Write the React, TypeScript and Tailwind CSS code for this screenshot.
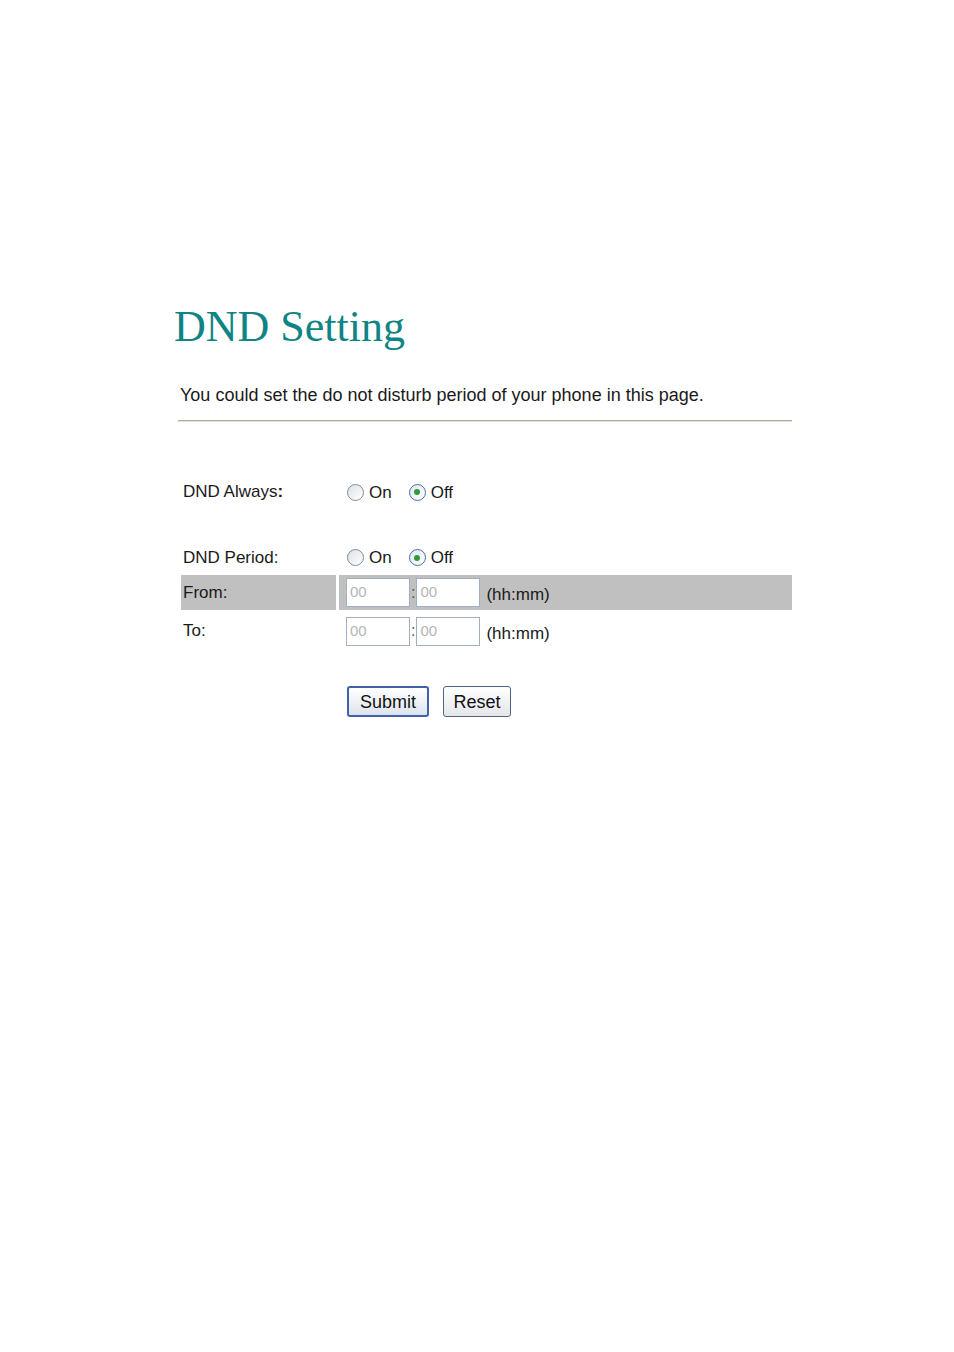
import React from "react";

function Radio({ checked, label }: { checked?: boolean; label: string }) {
  return (
    <div className="flex items-center">
      <div
        className={
          checked
            ? "w-[17px] h-[17px] rounded-full border border-[#4f6f9f] bg-gradient-to-br from-[#dfe6ee] to-white flex items-center justify-center"
            : "w-[17px] h-[17px] rounded-full border border-[#7d8c99] bg-gradient-to-br from-[#dde2e6] to-white"
        }
      >
        {checked && <div className="w-[6px] h-[6px] rounded-full bg-[#2f9a3a]" />}
      </div>
      <span className="ml-[5px] text-[17px] leading-none">{label}</span>
    </div>
  );
}

function TimeInput() {
  return (
    <div className="w-[64px] h-[29px] border border-[#9fb0c6] bg-white flex items-center pl-[3px] text-[15px] text-[#b5b5b5]">
      00
    </div>
  );
}

function TimeRow() {
  return (
    <div className="flex items-center pl-[7px]">
      <TimeInput />
      <span className="mx-[1px] text-[16px] text-[#555]">:</span>
      <TimeInput />
      <span className="ml-[6px] text-[17px] mt-[5px]">(hh:mm)</span>
    </div>
  );
}

export default function App() {
  return (
    <div className="min-h-[1352px] bg-white text-[#1a1a1a] font-['Liberation_Sans',Arial,sans-serif]">
      <div className="pl-[174px] pt-[305px]">
        <h1 className="font-['Liberation_Serif','Times_New_Roman',serif] text-[44px] leading-none h-[44px] text-[#0f8484]">
          DND Setting
        </h1>
        <p className="mt-[34px] ml-[6px] text-[18px] leading-[24px]">
          You could set the do not disturb period of your phone in this page.
        </p>
        <div className="mt-[13px] ml-[4px] w-[614px] border-t border-[#aeae9e]">
          <div className="h-[1px] bg-[#e2e2d8]" />
        </div>

        <div className="ml-[7px] mt-[53px] w-[611px] grid grid-cols-[155px_453px] gap-x-[3px]">
          <div className="h-[34px] flex items-center pl-[2px] text-[17px]">DND Always<b className="font-bold">:</b></div>
          <div className="h-[34px] flex items-center pl-[8px] gap-[17px]">
            <Radio label="On" />
            <Radio checked label="Off" />
          </div>

          <div className="mt-[31px] h-[35px] flex items-center pl-[2px] text-[17px]">DND Period:</div>
          <div className="mt-[31px] h-[35px] flex items-center pl-[8px] gap-[17px]">
            <Radio label="On" />
            <Radio checked label="Off" />
          </div>

          <div className="h-[35px] flex items-center pl-[2px] text-[17px] bg-[#c0c0c0]">From:</div>
          <div className="h-[35px] flex items-center bg-[#c0c0c0]">
            <TimeRow />
          </div>

          <div className="mt-[4px] h-[34px] flex items-center pl-[2px] text-[17px]">To:</div>
          <div className="mt-[4px] h-[34px] flex items-center">
            <TimeRow />
          </div>

          <div className="mt-[38px]" />
          <div className="mt-[38px] flex items-center pl-[8px] gap-[14px]">
            <button className="w-[82px] h-[31px] rounded-[3px] border-2 border-[#3f62a8] bg-gradient-to-b from-white to-[#dde4ee] text-[18px] leading-none text-[#111]">
              Submit
            </button>
            <button className="w-[68px] h-[31px] rounded-[3px] border border-[#4f6484] bg-gradient-to-b from-white to-[#e4e6ea] text-[18px] leading-none text-[#111]">
              Reset
            </button>
          </div>
        </div>
      </div>
    </div>
  );
}
